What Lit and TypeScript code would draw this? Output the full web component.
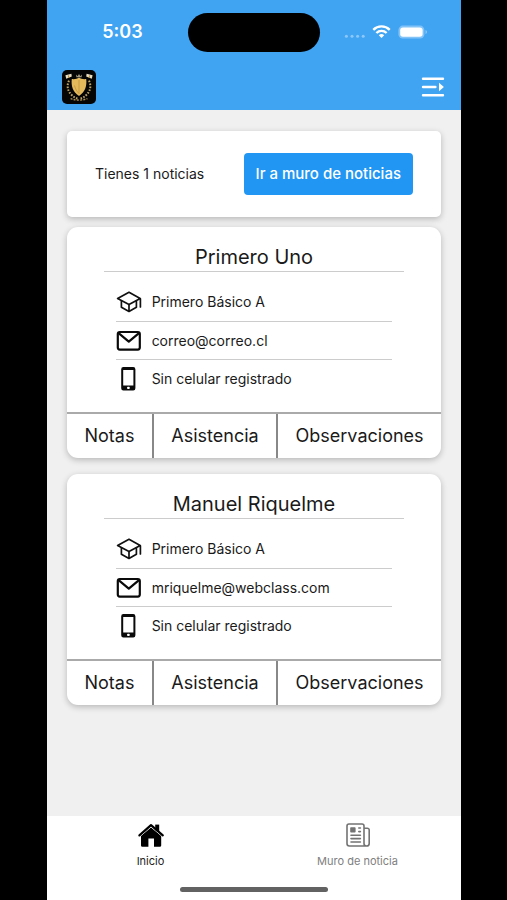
import { LitElement, html, css, svg } from "lit";
import { customElement, property } from "lit/decorators.js";

interface Student {
  name: string;
  course: string;
  email: string;
  phone: string;
}

const students: Student[] = [
  { name: "Primero Uno", course: "Primero Básico A", email: "correo@correo.cl", phone: "Sin celular registrado" },
  { name: "Manuel Riquelme", course: "Primero Básico A", email: "mriquelme@webclass.com", phone: "Sin celular registrado" },
];

const base = css`
  * {
    box-sizing: border-box;
  }
  svg {
    display: block;
  }
  button {
    font: inherit;
    color: inherit;
    background: none;
    border: 0;
    padding: 0;
    margin: 0;
    cursor: pointer;
  }
  a {
    color: inherit;
    text-decoration: none;
  }
`;

const icons = {
  school: svg`<svg width="26" height="26" viewBox="0 0 26 26" fill="none" stroke="#111" stroke-width="1.7" stroke-linejoin="round" stroke-linecap="round">
    <path d="M1.600 9.600 13 3.300 24.200 9.600 13 15.600Z"/><path d="M5.400 11.800v6.400L13 22.400l7.400-4.200v-6.400M13 15.800v6.200M24.400 9.800v8.200"/></svg>`,
  mail: svg`<svg width="26" height="26" viewBox="0 0 26 26" fill="none" stroke="#0a0a0a" stroke-width="2.200" stroke-linejoin="round" stroke-linecap="round">
    <rect x="1.800" y="4" width="22" height="17.600" rx="2"/><path d="M3.200 5.600 12.800 13.600l9.600-8"/></svg>`,
  phone: svg`<svg width="26" height="26" viewBox="0 0 26 26">
    <path fill="#0a0a0a" fill-rule="evenodd" d="M7.400 1h9.800a2.200 2.200 0 0 1 2.200 2.200v19a2.200 2.200 0 0 1-2.200 2.200H7.400a2.200 2.200 0 0 1-2.200-2.200v-19A2.200 2.200 0 0 1 7.400 1ZM7.200 4v15.600h10.200V4Z"/>
    <rect x="11" y="20.800" width="2.800" height="2.200" rx="1" fill="#fff"/></svg>`,
  home: svg`<svg width="28" height="28" viewBox="0 0 28 28">
    <path d="M18.200 3.600h4v7.400h-4Z"/>
    <path d="M14 6 24.200 14.600v9.800a1.400 1.400 0 0 1-1.400 1.400H17v-8.200h-5.600v8.200H5.400A1.400 1.400 0 0 1 4 24.400v-9.800Z"/>
    <path d="M2.600 15.800 14 6l11.600 9.800" fill="none" stroke="#fff" stroke-width="1"/>
    <path d="M2.400 14.400 14 4.200l11.800 10.200" fill="none" stroke="#000" stroke-width="2.200" stroke-linecap="round" stroke-linejoin="round"/></svg>`,
  news: svg`<svg width="28" height="28" viewBox="0 0 28 28" fill="none" stroke="#737373" stroke-width="1.600" stroke-linejoin="round" stroke-linecap="round">
    <path d="M23 25H5.400A2.400 2.400 0 0 1 3 22.600V5a2 2 0 0 1 2-2h13a2 2 0 0 1 2 2v17.400a2.600 2.600 0 0 0 5.200 0V9a1.800 1.800 0 0 0-1.800-1.800H20"/>
    <rect x="6.200" y="6.200" width="5.400" height="5.400" rx=".8" fill="#737373" stroke="none"/>
    <path d="M14.800 7h1.600M14.800 10.600h1.600M7 14.200h9.400M7 17.600h9.400M7 21h9.400"/></svg>`,
  menu: svg`<svg width="24" height="20" viewBox="0 0 24 20" fill="none" stroke="#fff" stroke-width="2.400" stroke-linecap="round">
    <path d="M2 1.700h20M2 10h12.400M2 18.300h20"/><path d="M18 5.800 22.900 10 18 14.200Z" fill="#fff" stroke="none"/></svg>`,
  status: svg`<svg width="84" height="16" viewBox="0 0 84 16" fill="#fff">
    <g opacity=".4"><circle cx="2.400" cy="12.200" r="1.500"/><circle cx="8" cy="12.200" r="1.500"/><circle cx="13.600" cy="12.200" r="1.500"/><circle cx="19.200" cy="12.200" r="1.500"/></g>
    <g fill="none" stroke="#fff" stroke-width="2.400"><path d="M29.300 5.800a11.600 11.600 0 0 1 16.400 0"/><path d="M32.400 9a7.200 7.200 0 0 1 10.200 0"/></g>
    <path d="M34.800 11.300a3.800 3.800 0 0 1 5.400 0l-2.700 2.700Z"/>
    <rect x="54.400" y="1.600" width="26" height="13" rx="4.400" opacity=".35"/><rect x="56.200" y="3.400" width="22.400" height="9.400" rx="2.800"/>
    <path d="M81.600 6v4c1.600-.6 1.600-3.400 0-4Z" opacity=".5"/></svg>`,
  crest: svg`<svg width="34" height="34" viewBox="0 0 34 34">
    <rect width="34" height="34" rx="5" fill="#050505"/>
    <path d="M17 7.600c2 1.400 4.800 1.800 7.200 1.400.8 6.600-.8 12.800-7.200 17-6.400-4.200-8-10.400-7.200-17 2.400.4 5.200 0 7.200-1.400Z" fill="#e3b95c"/>
    <path d="M17 10v13.800M12.400 15.400c1.200 4 2.400 6 4.600 8" fill="none" stroke="#c4963c" stroke-width=".9"/>
    <path d="m3.400 5.200 6-1.400.4 2.800-5.600 2.200ZM30.600 5.200l-6-1.400-.4 2.800 5.600 2.200Z" fill="#e6dcc4"/>
    <path d="M6.400 5.400 6.800 8M27.600 5.400 27.200 8" stroke="#b8882d"/>
    <path d="m14 4.600 1.600 1.600L17 4l1.400 2.200L20 4.600l-.4 2.600h-5.200Z" fill="#a39a82"/>
    <g fill="none" stroke="#c0a566" stroke-width="2" stroke-dasharray="1.600 1.400"><path d="M7 10.600C3.400 18 7.400 25.600 15.400 28.600"/><path d="M27 10.600C30.600 18 26.600 25.600 18.600 28.600"/></g>
    <path d="M8.600 28.600c5 2 11.800 2 16.800 0" fill="none" stroke="#a98f57" stroke-width="1.400" stroke-dasharray="2 1.200"/></svg>`,
};

@customElement("student-card")
class StudentCard extends LitElement {
  @property({ attribute: false }) student!: Student;

  static styles = [
    base,
    css`
      :host {
        display: block;
      }
      .card {
        background: #fff;
        border-radius: 11px;
        box-shadow: 0 2px 6px rgba(0, 0, 0, 0.24);
        overflow: hidden;
      }
      .name {
        width: 80%;
        margin: 0 auto;
        padding-top: 16px;
        border-bottom: 1px solid #ccc;
        font-size: 20px;
        line-height: 28px;
        font-weight: 400;
        text-align: center;
      }
      .details {
        list-style: none;
        width: 74%;
        margin: 0 auto;
        padding: 11px 0 15px;
      }
      .row {
        display: flex;
        align-items: center;
        gap: 10px;
        height: 38px;
        font-size: 14px;
        line-height: 20px;
      }
      .row + .row {
        border-top: 1px solid #ccc;
      }
      .actions {
        display: flex;
        border-top: 2px solid #aaa;
      }
      .action {
        flex: 1 1 auto;
        height: 44px;
        font-size: 18px;
        line-height: 24px;
      }
      .action + .action {
        border-left: 2px solid #888;
      }
    `,
  ];

  render() {
    const s = this.student;
    return html`
      <article class="card">
        <h2 class="name">${s.name}</h2>
        <ul class="details">
          <li class="row">${icons.school}<span>${s.course}</span></li>
          <li class="row">${icons.mail}<span>${s.email}</span></li>
          <li class="row">${icons.phone}<span>${s.phone}</span></li>
        </ul>
        <div class="actions">
          <button class="action">Notas</button>
          <button class="action">Asistencia</button>
          <button class="action">Observaciones</button>
        </div>
      </article>
    `;
  }
}

@customElement("app-root")
class AppRoot extends LitElement {
  static styles = [
    base,
    css`
      :host {
        display: block;
        background: #000;
        padding: 0 46px 0 47px;
        box-sizing: border-box;
        font-family: Inter, "Liberation Sans", sans-serif;
        color: #1a1a1a;
      }
      .screen {
        display: flex;
        flex-direction: column;
        min-height: 100vh;
        background: #f0f0f0;
      }
      .header {
        background: #40a4f3;
        color: #fff;
      }
      .status {
        display: grid;
        grid-template-columns: 1fr 132px 1fr;
        align-items: center;
        height: 64px;
      }
      .time {
        justify-self: center;
        padding-left: 10px;
        font-size: 18px;
        line-height: 24px;
        font-weight: 600;
      }
      .island {
        height: 39px;
        border-radius: 20px;
        background: #000;
      }
      .signals {
        justify-self: center;
        padding-right: 10px;
      }
      .toolbar {
        display: flex;
        align-items: center;
        justify-content: space-between;
        height: 46px;
        padding: 0 16px 0 15px;
      }
      .content {
        flex: 1;
        display: flex;
        flex-direction: column;
        padding: 21px 20px;
      }
      .news {
        display: flex;
        align-items: center;
        justify-content: space-between;
        height: 86px;
        padding: 0 28px;
        margin-bottom: 10px;
        background: #fff;
        border-radius: 5px;
        box-shadow: 0 2px 6px rgba(0, 0, 0, 0.24);
        font-size: 14px;
        line-height: 20px;
      }
      .go {
        height: 42px;
        padding: 0 12px;
        border-radius: 4px;
        background: #2196f3;
        color: #fff;
        font-size: 15px;
        font-weight: 500;
      }
      .students {
        display: flex;
        flex-direction: column;
        gap: 16px;
      }
      .bottom {
        background: #fff;
      }
      .tabs {
        display: flex;
      }
      .tab {
        flex: 1;
        display: flex;
        flex-direction: column;
        align-items: center;
        gap: 4px;
        padding: 5px 0 18px;
        font-size: 11px;
        line-height: 16px;
        color: #808080;
      }
      .current {
        color: #222;
      }
      .handle {
        width: 148px;
        height: 5px;
        margin: 0 auto 8px;
        border-radius: 3px;
        background: #626262;
      }
    `,
  ];

  render() {
    return html`
      <div class="screen">
        <header class="header">
          <div class="status">
            <span class="time">5:03</span>
            <span class="island"></span>
            <span class="signals">${icons.status}</span>
          </div>
          <div class="toolbar">
            ${icons.crest}
            <button aria-label="Menú">${icons.menu}</button>
          </div>
        </header>
        <main class="content">
          <section class="news">
            <span>Tienes 1 noticias</span>
            <button class="go">Ir a muro de noticias</button>
          </section>
          <div class="students">
            ${students.map((s) => html`<student-card .student=${s}></student-card>`)}
          </div>
        </main>
        <footer class="bottom">
          <nav class="tabs">
            <a class="tab current" href="#inicio">${icons.home}Inicio</a>
            <a class="tab" href="#muro">${icons.news}Muro de noticia</a>
          </nav>
          <div class="handle"></div>
        </footer>
      </div>
    `;
  }
}
